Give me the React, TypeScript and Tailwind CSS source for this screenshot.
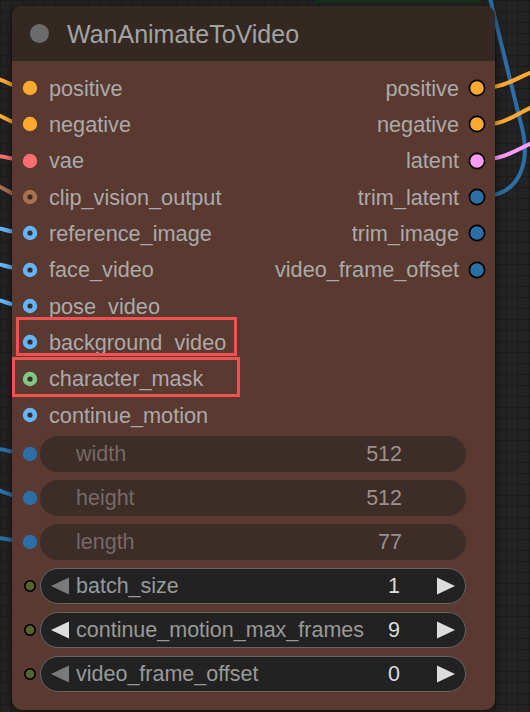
import type { ReactNode } from "react";

type Slot = { name: string; color: string; ring?: boolean };

const inputs: Slot[] = [
	{ name: "positive", color: "#ffa931" },
	{ name: "negative", color: "#ffa931" },
	{ name: "vae", color: "#ff6e6e" },
	{ name: "clip_vision_output", color: "#a8714f", ring: true },
	{ name: "reference_image", color: "#64b5f6", ring: true },
	{ name: "face_video", color: "#64b5f6", ring: true },
	{ name: "pose_video", color: "#64b5f6", ring: true },
	{ name: "background_video", color: "#64b5f6", ring: true },
	{ name: "character_mask", color: "#81c784", ring: true },
	{ name: "continue_motion", color: "#64b5f6", ring: true },
];

const outputs: Slot[] = [
	{ name: "positive", color: "#ffa931" },
	{ name: "negative", color: "#ffa931" },
	{ name: "latent", color: "#ff9cf9" },
	{ name: "trim_latent", color: "#2c6ea6" },
	{ name: "trim_image", color: "#2c6ea6" },
	{ name: "video_frame_offset", color: "#2c6ea6" },
];

const convertedWidgets = [
	{ name: "width", value: "512" },
	{ name: "height", value: "512" },
	{ name: "length", value: "77" },
];

const numberWidgets = [
	{ name: "batch_size", value: "1", leftActive: false },
	{ name: "continue_motion_max_frames", value: "9", leftActive: true },
	{ name: "video_frame_offset", value: "0", leftActive: false },
];

function InputDot({ slot }: { slot: Slot }) {
	return (
		<svg width="16" height="16" viewBox="0 0 16 16" className="shrink-0">
			<circle cx="8" cy="8" r="7.2" fill={slot.color} />
			{slot.ring && <circle cx="8" cy="8" r="2.6" fill="#3a2b26" />}
		</svg>
	);
}

function OutputDot({ color }: { color: string }) {
	return (
		<svg width="18" height="18" viewBox="0 0 18 18" className="shrink-0">
			<circle cx="9" cy="9" r="7.6" fill={color} stroke="#000" strokeWidth="1.6" />
		</svg>
	);
}

function Row({ children, className = "" }: { children: ReactNode; className?: string }) {
	return <div className={`h-[36.33px] flex items-center ${className}`}>{children}</div>;
}

function Wires() {
	return (
		<svg className="absolute inset-0 pointer-events-none" width="530" height="712" viewBox="0 0 530 712" fill="none" strokeWidth="4" strokeLinecap="round">
			{/* left side */}
			<path d="M-2,79 C6,81 12,86 22,88" stroke="#ffa931" />
			<path d="M-2,115 C6,118 12,123 22,125" stroke="#ffa931" />
			<path d="M-2,156 C6,157 12,159 22,160" stroke="#ff6e6e" />
			<path d="M-2,186 C6,189 12,195 22,197" stroke="#a8714f" />
			<path d="M-2,228 C6,230 12,232 22,233" stroke="#64b5f6" />
			<path d="M-2,264 C6,266 12,268 22,269" stroke="#64b5f6" />
			<path d="M-2,300 C6,302 12,305 22,306" stroke="#64b5f6" />
			<path d="M-2,449 C6,450 12,452 22,453" stroke="#2c6ea6" />
			<path d="M-2,490 C6,493 12,496 22,497" stroke="#2c6ea6" />
			<path d="M-2,538 C6,539 12,540 22,541" stroke="#2c6ea6" />
			{/* right side */}
			<path d="M480,197 C522,196 532,160 520,120 C510,80 498,30 490,-2" stroke="#2c6ea6" />
			<path d="M480,88 C505,88 516,78 532,72" stroke="#ffa931" />
			<path d="M480,125 C505,125 516,114 532,107" stroke="#ffa931" />
			<path d="M480,160 C505,159 516,150 532,143" stroke="#ff9cf9" />
		</svg>
	);
}

export default function App() {
	return (
		<div
			className="relative w-[530px] h-[712px] overflow-hidden bg-[#232323] bg-[linear-gradient(#1b1b1b_1px,transparent_1px),linear-gradient(90deg,#1b1b1b_1px,transparent_1px)] bg-[size:11px_11px] font-['Liberation_Sans',Arial,sans-serif]">
			<div className="absolute left-[315px] top-0 w-[165px] h-[3px] bg-[#16301a]" />
			<Wires />

			<div className="relative z-10 ml-[12px] mt-[6px] w-[483px] h-[704px] rounded-[10px] bg-[#593930] shadow-[0_2px_10px_rgba(0,0,0,0.55)]">
				{/* header */}
				<div className="h-[55px] flex items-center rounded-t-[10px] bg-[#332922]">
					<div className="ml-[18px] w-[19px] h-[19px] rounded-full bg-[#6b6b6b]" />
					<span className="ml-[18px] pt-[1px] text-[25px] text-[#a3a3a3] leading-none">WanAnimateToVideo</span>
				</div>

				{/* slots */}
				<div className="pt-[9px] flex justify-between text-[21.7px] text-[#aaaaaa] leading-none">
					<div className="flex flex-col">
						{inputs.map((s) => (
							<Row key={s.name} className="pl-[10px] gap-[11px]">
								<InputDot slot={s} />
								<span className="pt-[1px]">{s.name}</span>
							</Row>
						))}
					</div>
					<div className="flex flex-col items-end">
						{outputs.map((s) => (
							<Row key={s.name} className="pr-[9px] gap-[9px]">
								<span className="pt-[1px]">{s.name}</span>
								<OutputDot color={s.color} />
							</Row>
						))}
					</div>
				</div>

				{/* widgets */}
				<div className="mt-[3px] flex flex-col gap-[8px] text-[21.5px] leading-none">
					{convertedWidgets.map((w) => (
						<div key={w.name} className="flex items-center">
							<svg width="16" height="16" viewBox="0 0 16 16" className="ml-[10px] shrink-0">
								<circle cx="8" cy="8" r="7.2" fill="#2c6ea6" />
							</svg>
							<div className="ml-[2px] w-[426px] h-[36px] rounded-full bg-[#3d2d29] flex items-center justify-between pl-[36px] pr-[64px]">
								<span className="pt-[1px] text-[#776964]">{w.name}</span>
								<span className="pt-[1px] text-[#9a918e]">{w.value}</span>
							</div>
						</div>
					))}
					{numberWidgets.map((w) => (
						<div key={w.name} className="flex items-center">
							<svg width="14" height="14" viewBox="0 0 14 14" className="ml-[11px] shrink-0">
								<circle cx="7" cy="7" r="5.2" fill="#56622f" stroke="#000" strokeWidth="1.6" />
							</svg>
							<div className="ml-[3px] w-[426px] h-[36px] rounded-full bg-[#222222] border-[1.5px] border-[#666666] flex items-center pl-[10px] pr-[10px]">
								<svg width="18" height="18" viewBox="0 0 18 18" className="shrink-0">
									<polygon points="18,0.5 18,17.5 0,9" fill={w.leftActive ? "#dddddd" : "#7a7a7a"} />
								</svg>
								<span className="ml-[7px] pt-[1px] text-[#999999]">{w.name}</span>
								<span className="ml-auto pt-[1px] text-[#dddddd]">{w.value}</span>
								<svg width="18" height="18" viewBox="0 0 18 18" className="ml-[37px] shrink-0">
									<polygon points="0,0.5 0,17.5 18,9" fill="#dddddd" />
								</svg>
							</div>
						</div>
					))}
				</div>

				{/* annotation boxes */}
				<div className="absolute left-[4px] top-[311px] w-[221px] h-[39px] border-[3px] border-[#f05252]" />
				<div className="absolute left-0 top-[351px] w-[228px] h-[40px] border-[3px] border-[#f05252]" />
			</div>
		</div>
	);
}
